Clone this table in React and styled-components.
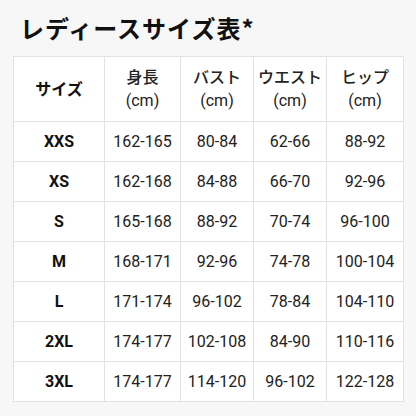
import React from 'react';
import styled, { createGlobalStyle } from 'styled-components';

const GlobalStyle = createGlobalStyle`
  html, body {
    margin: 0;
    padding: 0;
    background: #f7f7f7;
  }
  body {
    font-family: Roboto, 'Noto Sans CJK JP', sans-serif;
    color: #1a1a1a;
  }
`;

const Page = styled.div`
  width: 416px;
  height: 416px;
  padding: 12px 13px 0 13px;
  box-sizing: border-box;
`;

const Title = styled.h1`
  margin: 0 0 12px 7px;
  font-family: 'Noto Sans CJK JP', sans-serif;
  font-size: 24px;
  line-height: 32px;
  font-weight: 700;
  letter-spacing: 1px;
  color: #111;
`;

const Table = styled.table`
  width: 390px;
  border-collapse: collapse;
  background: #fff;
  table-layout: fixed;
`;

const Cell = styled.td`
  border: 1px solid #e2e2e2;
  text-align: center;
  padding: 0;
  height: ${(p) => (p.$head ? '64px' : '39px')};
  font-size: 16px;
  line-height: 23px;
  font-weight: ${(p) => (p.$bold ? 700 : p.$head ? 500 : 400)};
  color: ${(p) => (p.$bold ? '#111' : '#222')};
`;

const Unit = styled.span`
  display: block;
  font-weight: 400;
`;

const columns = [
  { label: 'サイズ', width: 91 },
  { label: '身長', width: 76, unit: true },
  { label: 'バスト', width: 73, unit: true },
  { label: 'ウエスト', width: 73, unit: true },
  { label: 'ヒップ', width: 77, unit: true },
];

const rows = [
  ['XXS', '162-165', '80-84', '62-66', '88-92'],
  ['XS', '162-168', '84-88', '66-70', '92-96'],
  ['S', '165-168', '88-92', '70-74', '96-100'],
  ['M', '168-171', '92-96', '74-78', '100-104'],
  ['L', '171-174', '96-102', '78-84', '104-110'],
  ['2XL', '174-177', '102-108', '84-90', '110-116'],
  ['3XL', '174-177', '114-120', '96-102', '122-128'],
];

export default function App() {
  return (
    <Page>
      <GlobalStyle />
      <Title>レディースサイズ表*</Title>
      <Table>
        <colgroup>
          {columns.map((c) => (
            <col key={c.label} style={{ width: c.width }} />
          ))}
        </colgroup>
        <thead>
          <tr>
            {columns.map((c, i) => (
              <Cell as='th' key={c.label} $head $bold={i === 0}>
                {c.label}
                {c.unit && <Unit>(cm)</Unit>}
              </Cell>
            ))}
          </tr>
        </thead>
        <tbody>
          {rows.map((r) => (
            <tr key={r[0]}>
              {r.map((v, i) => (
                <Cell key={i} $bold={i === 0}>
                  {v}
                </Cell>
              ))}
            </tr>
          ))}
        </tbody>
      </Table>
    </Page>
  );
}
